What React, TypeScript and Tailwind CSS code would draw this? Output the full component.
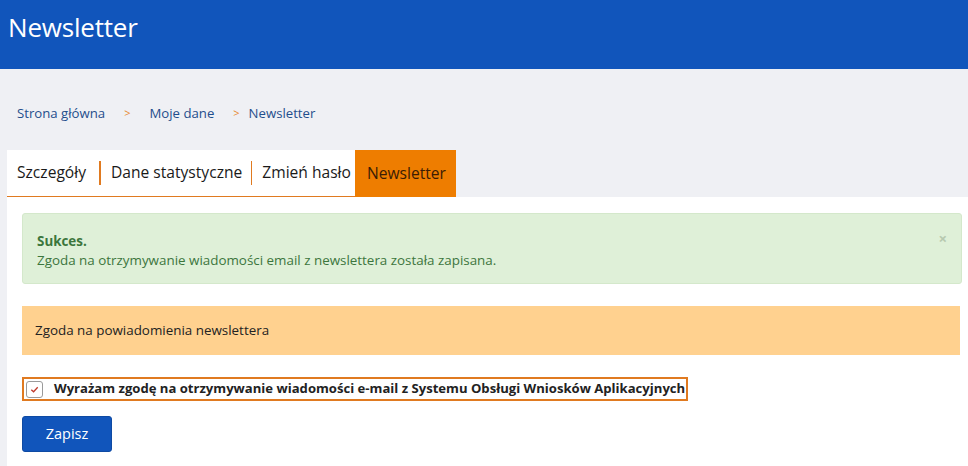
import React from "react";

export default function App() {
  const font = { fontFamily: '"Open Sans", "Noto Sans", sans-serif' };
  return (
    <div className="w-[968px] h-[466px] overflow-hidden bg-[#eff0f4]" style={font}>
      <div className="h-[69px] bg-[#1155bb] flex items-center px-2">
        <h1 className="text-[26px] text-white font-normal leading-none mt-[-15px] tracking-[-0.2px]">Newsletter</h1>
      </div>
      <div className="flex items-center h-[81px] pl-[17px] pt-[8px] text-[13.2px] text-[#1f4e8c]">
        <span>Strona główna</span>
        <span className="text-[#e8892c] text-[11px] mx-[19px]">&gt;</span>
        <span>Moje dane</span>
        <span className="text-[#e8892c] text-[11px] ml-[19px] mr-[9px]">&gt;</span>
        <span>Newsletter</span>
      </div>
      <div className="pl-[7px]">
        <div className="flex h-[47px] items-stretch">
          <div className="flex items-stretch bg-white border-b-[1.5px] border-[#e07a20]">
            <div className="flex items-center pl-[10px] pr-[13px] text-[15.6px] text-[#1a1a1a]">Szczegóły</div>
            <div className="w-[2px] bg-[#e07a20] my-[11px]" />
            <div className="flex items-center pl-[10px] pr-[9px] text-[15.6px] text-[#1a1a1a]">Dane statystyczne</div>
            <div className="w-[1px] bg-[#e07a20] my-[11px]" />
            <div className="flex items-center pl-[10px] pr-[4px] text-[15.6px] text-[#1a1a1a]">Zmień hasło</div>
          </div>
          <div className="flex items-center pl-[12px] pr-[10px] bg-[#ee7d00] text-[15.6px] text-[#3b1c05]">Newsletter</div>
        </div>
        <div className="bg-white h-[300px] pl-[15px] pt-[16px] pr-[6px]">
          <div className="relative bg-[#dff0d8] border border-[#d4e8cb] rounded-[3px] h-[71px] px-[14px] pt-[18px] text-[13.4px] leading-[19px]">
            <div className="font-bold text-[#3c763d]">Sukces.</div>
            <div className="text-[#3c763d]">Zgoda na otrzymywanie wiadomości email z newslettera została zapisana.</div>
            <span className="absolute right-[14px] top-[17px] text-[#b7c9b0] font-bold text-[15px] leading-none">×</span>
          </div>
          <div className="mt-[22px] bg-[#ffd18f] h-[49px] mr-[2px] px-[13px] flex items-center text-[13.4px] text-[#222]">
            Zgoda na powiadomienia newslettera
          </div>
          <div className="mt-[22px] inline-flex items-center border-2 border-[#e07a20] h-[24px] pl-[2px] pr-[1px]">
            <div className="w-[17px] h-[17px] border border-[#9a9a9a] rounded-[3px] flex items-center justify-center bg-white">
              <svg width="11" height="11" viewBox="0 0 12 12"><path d="M2.5 6.2 L5 8.5 L9.5 3.5" stroke="#c0392b" strokeWidth="1.4" fill="none" /></svg>
            </div>
            <span className="ml-[11px] font-bold text-[13.1px] text-[#222]">Wyrażam zgodę na otrzymywanie wiadomości e-mail z Systemu Obsługi Wniosków Aplikacyjnych</span>
          </div>
          <div className="mt-[15px]">
            <button className="w-[90px] h-[36px] bg-[#1155bb] rounded-[3px] text-white text-[14.5px] border border-[#0e4aa3]">Zapisz</button>
          </div>
        </div>
      </div>
    </div>
  );
}
